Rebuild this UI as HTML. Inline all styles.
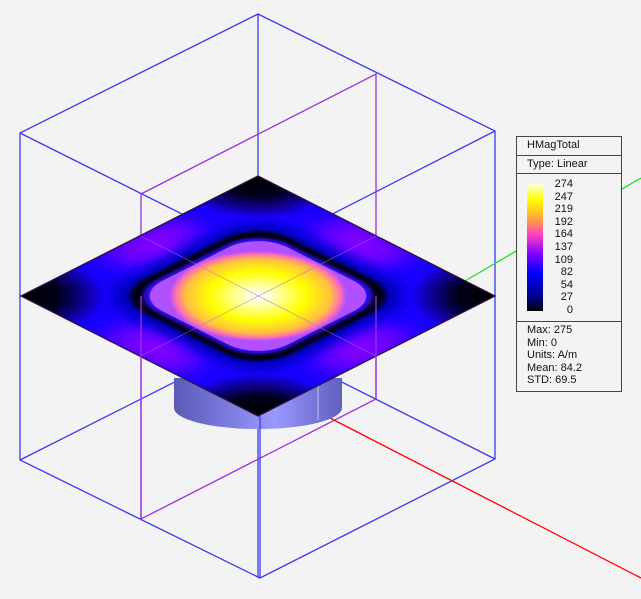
<!DOCTYPE html>
<html><head><meta charset="utf-8"><style>
body{margin:0;width:641px;height:599px;background:#f3f3f3;overflow:hidden;position:relative;font-family:"Liberation Sans",sans-serif}
svg{position:absolute;left:0;top:0}
#lg{position:absolute;left:516px;top:136px;width:104px;height:254px;border:1px solid #444;background:#f3f3f3;font-size:11px;color:#111}
.r{border-bottom:1px solid #444;padding-left:10px}
</style></head><body>
<svg width="641" height="599">
<defs>
<linearGradient id="cyl" x1="0" x2="1"><stop offset="0" stop-color="#5a5ab8"/><stop offset=".6" stop-color="#9898ff"/><stop offset="1" stop-color="#6060c0"/></linearGradient>
<radialGradient id="br"><stop offset="0" stop-color="#fff"/><stop offset=".2" stop-color="#ffffb0"/><stop offset=".55" stop-color="#ffff00"/><stop offset=".82" stop-color="#ffc040"/><stop offset=".93" stop-color="#ff70b0"/><stop offset="1" stop-color="#b050ff"/></radialGradient>
<radialGradient id="cor"><stop offset="0" stop-color="#000"/><stop offset=".45" stop-color="#000018"/><stop offset="1" stop-color="#000" stop-opacity="0"/></radialGradient>
<radialGradient id="pu"><stop offset="0" stop-color="#9000ff"/><stop offset=".6" stop-color="#7000ff" stop-opacity=".8"/><stop offset="1" stop-color="#4000ff" stop-opacity="0"/></radialGradient>
<filter id="b1" x="-50%" y="-50%" width="200%" height="200%"><feGaussianBlur stdDeviation=".05"/></filter>
<filter id="b2" x="-50%" y="-50%" width="200%" height="200%"><feGaussianBlur stdDeviation=".02"/></filter>
<clipPath id="sq"><rect x="-1" y="-1" width="2" height="2"/></clipPath>
</defs>
<g fill="none" stroke="#3a3af0" stroke-width="1.3">
<path d="M258 14 L20 133 L20 460 L260 578 L495 459 L495 131 Z M258 14 V578 M20 133 L258 252 L495 131 M20 460 L258 340 L495 459"/>
</g>
<path d="M141 194 L376 74 L376 399 L141 519 Z" fill="none" stroke="#9a30e0" stroke-width="1.3"/>
<line x1="330" y1="418" x2="641" y2="578" stroke="#f00" stroke-width="1.3"/>
<line x1="465" y1="281" x2="641" y2="178" stroke="#20e020" stroke-width="1.3"/>
<path d="M174 378 V408 A84 21 0 0 0 342 408 V378 Z" fill="url(#cyl)"/>
<line x1="318" y1="385" x2="318" y2="420" stroke="#c0c0ff" stroke-width="1"/>
<g transform="matrix(118.5,60,118.5,-60,258,296)">
<g clip-path="url(#sq)">
<rect x="-1" y="-1" width="2" height="2" fill="#1800ff"/>
<g filter="url(#b1)">
<ellipse cx="0" cy="-0.88" rx=".45" ry=".25" fill="url(#pu)"/>
<ellipse cx="0" cy="0.88" rx=".45" ry=".25" fill="url(#pu)"/>
<ellipse cx="-0.88" cy="0" rx=".25" ry=".45" fill="url(#pu)"/>
<ellipse cx="0.88" cy="0" rx=".25" ry=".45" fill="url(#pu)"/>
</g>
<circle cx="1" cy="1" r=".5" fill="url(#cor)"/>
<circle cx="-1" cy="1" r=".5" fill="url(#cor)"/>
<circle cx="1" cy="-1" r=".5" fill="url(#cor)"/>
<circle cx="-1" cy="-1" r=".5" fill="url(#cor)"/>
<rect x="-.7" y="-.7" width="1.4" height="1.4" rx=".3" fill="#0000c0" filter="url(#b1)"/>
<rect x="-.62" y="-.62" width="1.24" height="1.24" rx=".28" fill="#000" filter="url(#b2)"/>
<rect x="-.56" y="-.56" width="1.12" height="1.12" rx=".26" fill="#3010ff" filter="url(#b2)"/>
<rect x="-.53" y="-.53" width="1.06" height="1.06" rx=".25" fill="url(#br)"/>
</g>
<rect x="-1" y="-1" width="2" height="2" fill="none" stroke="#301040" stroke-width=".012"/>
</g>
<g stroke="#a070e0" stroke-width=".7" opacity=".7"><line x1="141" y1="236" x2="376" y2="356"/><line x1="141" y1="356" x2="376" y2="236"/></g>
<g fill="none" stroke="#3a3af0" stroke-width="1.3"><path d="M260 416 V578"/></g>
<path d="M141 296 V519 M376 296 V399" stroke="#9a30e0" stroke-width="1.3"/>
</svg>
<div id="lg">
<div class="r" style="height:18px;line-height:17px">HMagTotal</div>
<div class="r" style="height:17px;line-height:17px">Type: Linear</div>
<div class="r" style="height:147px;position:relative">
<div style="position:absolute;left:10px;top:10px;width:16px;height:127px;background:linear-gradient(to top,#000 0%,#000080 10%,#0000ff 30%,#8000ff 45%,#ff40c0 60%,#ffa040 72%,#ffff00 88%,#ffffe0 100%)"></div>
<div style="position:absolute;left:30px;width:26px;top:4px;text-align:right;line-height:12.6px">274<br>247<br>219<br>192<br>164<br>137<br>109<br>82<br>54<br>27<br>0</div>
</div>
<div style="padding:2px 0 0 10px;line-height:12.5px">Max: 275<br>Min: 0<br>Units: A/m<br>Mean: 84.2<br>STD: 69.5</div>
</div>
</body></html>
